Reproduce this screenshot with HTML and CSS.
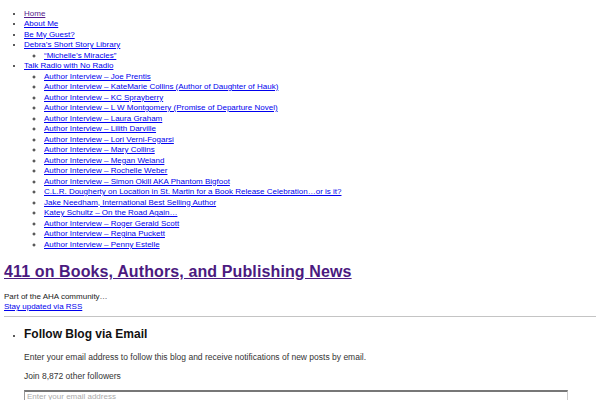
FILE: index.html
```html
<!DOCTYPE html>
<html lang="en">
<head>
    <meta charset="UTF-8">
    <title>411 on Books, Authors, and Publishing News</title>
    <link rel="stylesheet" href="styles.css">
</head>
<body>
    <div class="page">
        <ul class="menu">
            <li><a href="#" class="seen">Home</a></li>
            <li><a href="#">About Me</a></li>
            <li><a href="#">Be My Guest?</a></li>
            <li><a href="#">Debra’s Short Story Library</a>
                <ul>
                    <li><a href="#">“Michelle’s Miracles”</a></li>
                </ul>
            </li>
            <li><a href="#">Talk Radio with No Radio</a>
                <ul>
                    <li><a href="#">Author Interview – Joe Prentis</a></li>
                    <li><a href="#">Author Interview – KateMarie Collins (Author of Daughter of Hauk)</a></li>
                    <li><a href="#">Author Interview – KC Sprayberry</a></li>
                    <li><a href="#">Author Interview – L W Montgomery (Promise of Departure Novel)</a></li>
                    <li><a href="#">Author Interview – Laura Graham</a></li>
                    <li><a href="#">Author Interview – Lilith Darville</a></li>
                    <li><a href="#">Author Interview – Lori Verni-Fogarsi</a></li>
                    <li><a href="#">Author Interview – Mary Collins</a></li>
                    <li><a href="#">Author Interview – Megan Weiand</a></li>
                    <li><a href="#">Author Interview – Rochelle Weber</a></li>
                    <li><a href="#">Author Interview – Simon Okill AKA Phantom Bigfoot</a></li>
                    <li><a href="#">C.L.R. Dougherty on Location in St. Martin for a Book Release Celebration…or is it?</a></li>
                    <li><a href="#">Jake Needham, International Best Selling Author</a></li>
                    <li><a href="#">Katey Schultz – On the Road Again…</a></li>
                    <li><a href="#">Author Interview – Roger Gerald Scott</a></li>
                    <li><a href="#">Author Interview – Regina Puckett</a></li>
                    <li><a href="#">Author Interview – Penny Estelle</a></li>
                </ul>
            </li>
        </ul>

        <header class="site-header">
            <h1 class="site-title"><a href="#" class="seen">411 on Books, Authors, and Publishing News</a></h1>
            <p class="tagline">Part of the AHA community…</p>
            <a href="#" class="rss">Stay updated via RSS</a>
        </header>

        <hr class="divider">

        <ul class="widgets">
            <li class="widget">
                <h2>Follow Blog via Email</h2>
                <p>Enter your email address to follow this blog and receive notifications of new posts by email.</p>
                <p>Join 8,872 other followers</p>
                <input type="email" class="email-field" placeholder="Enter your email address">
            </li>
        </ul>
    </div>
</body>
</html>
```

FILE: styles.css
```css
body {
    margin: 0;
    background: #fff;
    font-family: "Liberation Sans", Arial, sans-serif;
    color: #222;
    overflow: hidden;
}

.page {
    padding: 8.5px 4px 0;
}

a {
    color: #0000ee;
}

a.seen {
    color: #551a8b;
}

.menu {
    margin: 0;
    padding-left: 20px;
    font-size: 8px;
    line-height: 10.5px;
}

.menu ul {
    margin: 0;
    padding-left: 20px;
}

.site-header {
    font-size: 8px;
    line-height: 10px;
}

.site-title {
    font-size: 16px;
    line-height: 18px;
    letter-spacing: 0.12px;
    margin: 13px 0 11px;
}

.site-title a {
    color: #4b1a80;
}

.tagline {
    margin: 0;
    color: #222;
}

.rss {
    display: block;
}

.divider {
    margin: 4px 0 0;
    height: 0;
    border: 0;
    border-top: 1px solid #c4c4c4;
}

.widgets {
    margin: 10px 0 0;
    padding-left: 20px;
    font-size: 8px;
    line-height: 10px;
}

.widget h2 {
    font-size: 12px;
    line-height: 14px;
    margin: 0 0 11px;
    color: #111;
}

.widget p {
    margin: 0 0 9px;
    font-size: 8.5px;
    color: #333;
}

.email-field {
    display: block;
    box-sizing: border-box;
    width: 544px;
    height: 22px;
    margin: 0;
    padding: 0 2px 10px;
    font-family: "Liberation Sans", Arial, sans-serif;
    font-size: 8px;
    border: 1px solid #ccc;
    border-top: 2px solid #777;
    border-left-color: #999;
}

.email-field::placeholder {
    color: #aaa;
}
```
